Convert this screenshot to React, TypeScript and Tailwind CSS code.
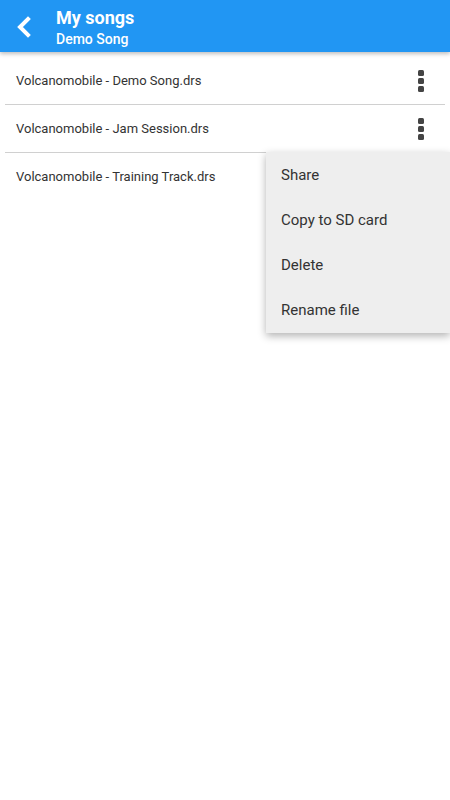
import React from "react";

const Dots = () => (
  <svg width="6" height="22" viewBox="0 0 6 22">
    <rect x="0" y="0" width="6" height="6" rx="1.5" fill="#444" />
    <rect x="0" y="8" width="6" height="6" rx="1.5" fill="#444" />
    <rect x="0" y="16" width="6" height="6" rx="1.5" fill="#444" />
  </svg>
);

const rows = [
  { name: "Volcanomobile - Demo Song.drs", dots: true },
  { name: "Volcanomobile - Jam Session.drs", dots: true },
  { name: "Volcanomobile - Training Track.drs", dots: false },
];

export default function App() {
  return (
    <div
      className="relative w-[450px] h-[800px] bg-white overflow-hidden"
      style={{ fontFamily: "Roboto, 'Liberation Sans', sans-serif" }}
    >
      <div className="relative z-10 h-[52px] bg-[#2196f3] flex items-center shadow-[0_2px_4px_rgba(0,0,0,0.25)]">
        <div className="w-[56px] flex items-center justify-center pr-[8px] pt-[1px]">
          <svg width="16" height="22" viewBox="0 0 16 22">
            <path d="M12 3 L4 11 L12 19" stroke="#fff" strokeWidth="4" fill="none" strokeLinecap="square" />
          </svg>
        </div>
        <div className="flex flex-col text-white pt-[4px]">
          <div className="text-[18px] font-bold leading-[22px]">My songs</div>
          <div className="text-[14px] font-medium leading-[20px]">Demo Song</div>
        </div>
      </div>
      <div className="px-[5px] pt-[5px]">
        {rows.map((r, i) => (
          <div
            key={i}
            className={`h-[48px] flex items-center justify-between pl-[11px] pr-[21px] ${
              i < 2 ? "border-b border-[#d0d0d0]" : ""
            }`}
          >
            <span className="text-[13px] text-[#333]">{r.name}</span>
            {r.dots && <Dots />}
          </div>
        ))}
      </div>
      <div className="absolute left-[266px] top-[152px] w-[184px] bg-[#eeeeee] shadow-[0_3px_8px_rgba(0,0,0,0.3)] pt-[1px] z-20">
        {["Share", "Copy to SD card", "Delete", "Rename file"].map((t) => (
          <div key={t} className="h-[45px] flex items-center pl-[15px] text-[15px] text-[#333]">
            {t}
          </div>
        ))}
      </div>
    </div>
  );
}
